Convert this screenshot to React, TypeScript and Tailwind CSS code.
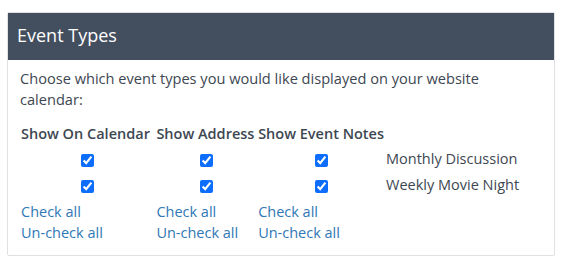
import { useState } from "react";

const events = ["Monthly Discussion", "Weekly Movie Night"];

export default function App() {
  const [checks, setChecks] = useState(
    events.map(() => [true, true, true])
  );

  const setCol = (col: number, value: boolean) =>
    setChecks((prev) => prev.map((row) => row.map((v, i) => (i === col ? value : v))));

  const toggle = (row: number, col: number) =>
    setChecks((prev) =>
      prev.map((r, ri) => (ri === row ? r.map((v, ci) => (ci === col ? !v : v)) : r))
    );

  return (
    <div
      className="min-h-screen w-full bg-white pt-3 px-[7px]"
      style={{ fontFamily: '"Open Sans", sans-serif' }}
    >
      <div className="w-[548px] border border-[#dfe1e4] rounded-[2px]">
        {/* Header */}
        <div className="h-[47px] bg-[#434e5e] flex items-center px-[9px] pb-[2px]">
          <h2 className="text-[18px] text-white font-normal">Event Types</h2>
        </div>

        {/* Body */}
        <div className="px-3 pt-[8px] pb-[12px] text-[#3d4752]">
          <p className="text-[14.6px] leading-[21px]">
            Choose which event types you would like displayed on your website calendar:
          </p>

          <table className="mt-[12px] text-[14.5px] border-collapse table-fixed">
            <thead>
              <tr className="h-[24px]">
                <th className="w-[136px] text-left font-semibold px-[1px] whitespace-nowrap">Show On Calendar</th>
                <th className="w-[102px] text-left font-semibold px-[1px] whitespace-nowrap">Show Address</th>
                <th className="w-[127px] text-left font-semibold px-[1px] whitespace-nowrap">Show Event Notes</th>
                <th className="w-[160px]"></th>
              </tr>
            </thead>
            <tbody>
              {events.map((name, ri) => (
                <tr key={name} className="h-[26px]">
                  {checks[ri].map((v, ci) => (
                    <td key={ci} className="text-center">
                      <input
                        type="checkbox"
                        checked={v}
                        onChange={() => toggle(ri, ci)}
                        className="w-[13px] h-[13px] accent-[#0d6efd] align-middle"
                      />
                    </td>
                  ))}
                  <td className="px-[1px] whitespace-nowrap">{name}</td>
                </tr>
              ))}
              <tr>
                {[0, 1, 2].map((ci) => (
                  <td key={ci} className="pt-[3px] px-[1px] align-top whitespace-nowrap">
                    <a
                      href="#"
                      onClick={(e) => {
                        e.preventDefault();
                        setCol(ci, true);
                      }}
                      className="block text-[#2f78b5] leading-[21px]"
                    >
                      Check all
                    </a>
                    <a
                      href="#"
                      onClick={(e) => {
                        e.preventDefault();
                        setCol(ci, false);
                      }}
                      className="block text-[#2f78b5] leading-[21px]"
                    >
                      Un-check all
                    </a>
                  </td>
                ))}
                <td></td>
              </tr>
            </tbody>
          </table>
        </div>
      </div>
    </div>
  );
}
